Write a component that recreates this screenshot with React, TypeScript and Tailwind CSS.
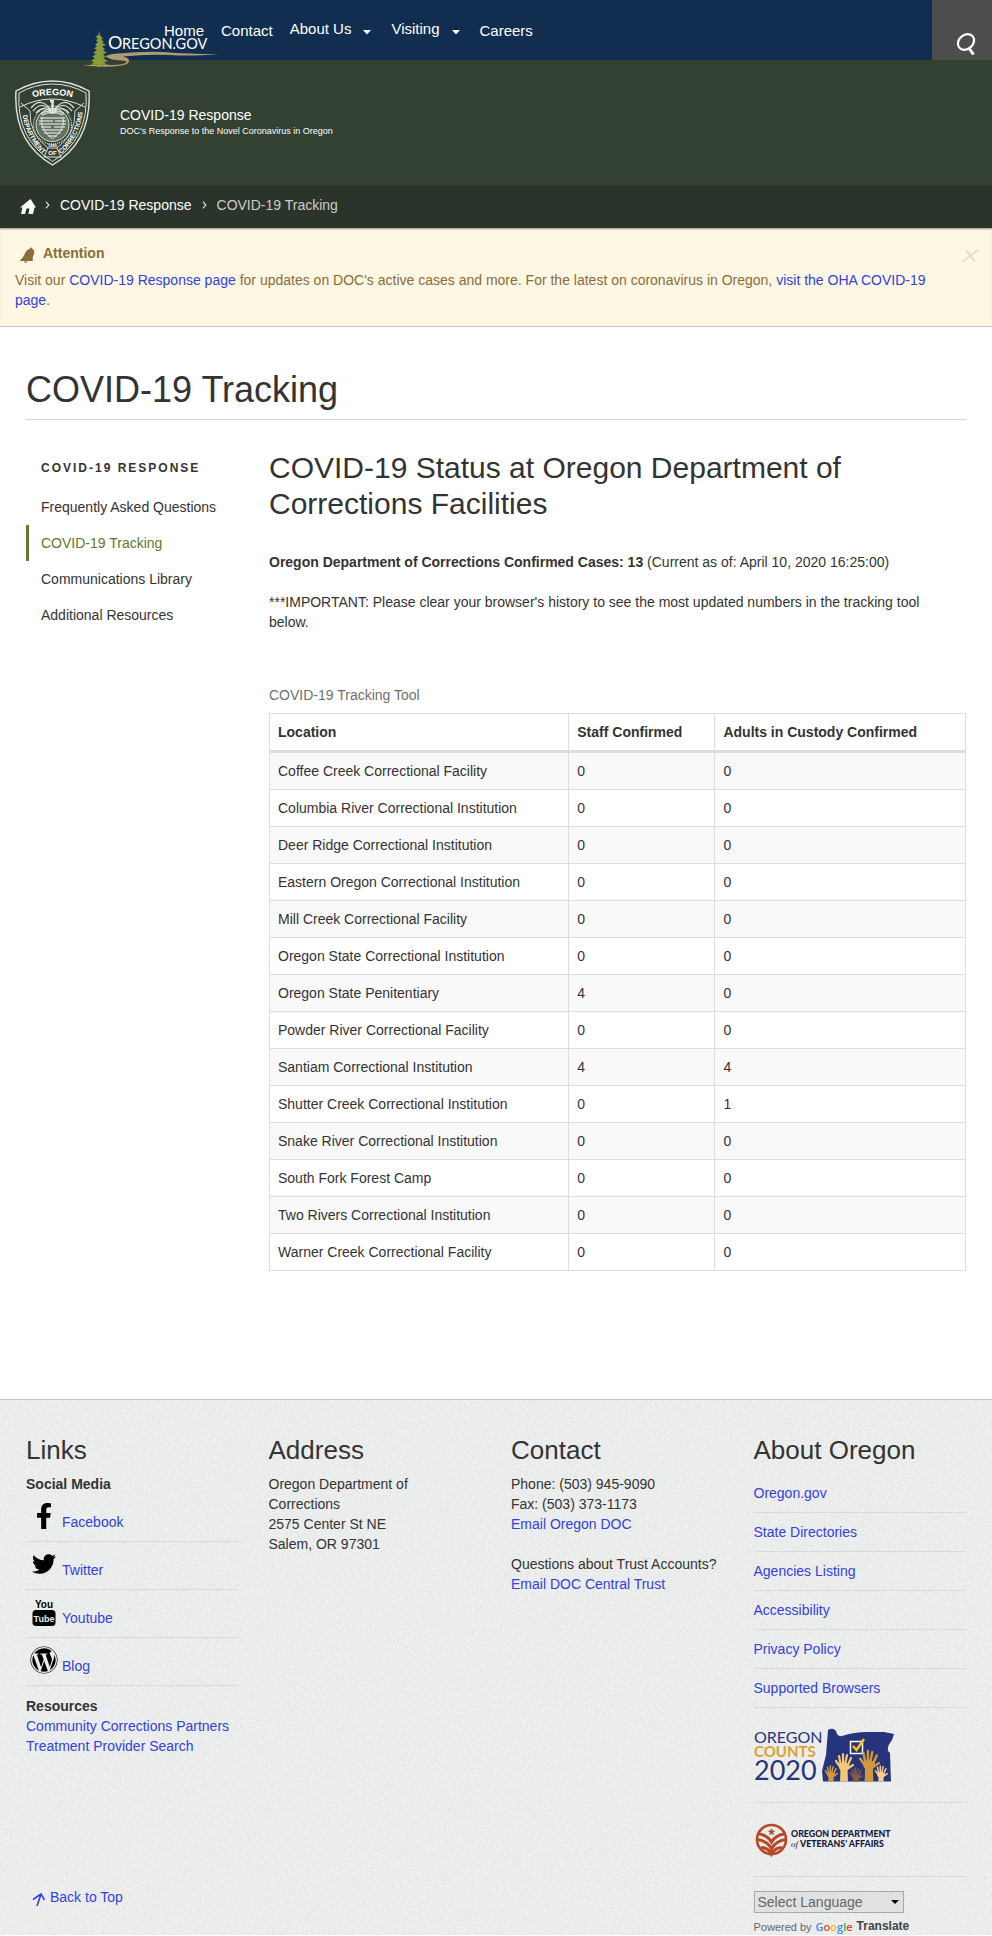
import React from "react";
import { FaFacebookF, FaTwitter, FaWordpress } from "react-icons/fa";

const rows: [string, number, number][] = [
  ["Coffee Creek Correctional Facility", 0, 0],
  ["Columbia River Correctional Institution", 0, 0],
  ["Deer Ridge Correctional Institution", 0, 0],
  ["Eastern Oregon Correctional Institution", 0, 0],
  ["Mill Creek Correctional Facility", 0, 0],
  ["Oregon State Correctional Institution", 0, 0],
  ["Oregon State Penitentiary", 4, 0],
  ["Powder River Correctional Facility", 0, 0],
  ["Santiam Correctional Institution", 4, 4],
  ["Shutter Creek Correctional Institution", 0, 1],
  ["Snake River Correctional Institution", 0, 0],
  ["South Fork Forest Camp", 0, 0],
  ["Two Rivers Correctional Institution", 0, 0],
  ["Warner Creek Correctional Facility", 0, 0],
];

const link = "text-[#3341dd] hover:underline";

function OregonGovLogo() {
  return (
    <svg viewBox="0 0 140 38" className="h-[38px] w-[140px] overflow-visible" role="img" aria-label="Oregon.gov">
      <path d="M-15 34.500 Q2 33 14 34 Q26 33.500 28 31.500 Q30 30 24 29.500 Q12 29 8 26 Q7 23.500 20 22.500 Q45 20 66 21 Q90 23 120 23 Q92 25.500 72 24 Q48 23 25 25.500 Q32 27 31 30.500 Q30 34 20 35 Q8 36.500 -15 34.500Z" fill="#b09a70" />
      <path d="M1 0 L2 4 5 8 3 8.500 6 11 4 12 8 14 4 15.500 7 18 5 19 9 22 5 23 8 26 5 27 10 30 6 31 9 34 3 33.500V36H-0.500V33.500L-7 34 -4 31 -7 30 -3 27 -6 26 -2 23 -5 22 -1 19 -4 17.500 -1 15 -3 14 0 11 -2 9.500 0 7 -3 6 0.500 4Z" fill="#8b9d3a" />
      <g fill="#fff" fontFamily="Lato, sans-serif">
        <text x="10" y="17.500" fontSize="18">O</text>
        <text x="24" y="17.500" fontSize="14.500">REGON.GOV</text>
      </g>
    </svg>
  );
}

function Seal() {
  return (
    <svg viewBox="0 0 75 86" className="h-[86px] w-[75px]" role="img" aria-label="Oregon Department of Corrections">
      <defs>
        <path id="seal-top" d="M12 19 Q37.500 11 63 19" />
        <path id="seal-left" d="M7.500 31 Q9 57 31 77" />
        <path id="seal-right" d="M44 76 Q66 57 68 29" />
      </defs>
      <g fill="none" stroke="#dfe4df">
        <path d="M37.500 1 Q56 1 74 11 Q77 62 37.500 85 Q-2 62 1 11 Q19 1 37.500 1Z" strokeWidth="1.400" />
        <path d="M37.500 4 Q55 4 71 13 Q74 59 37.500 81.500 Q1 59 4 13 Q20 4 37.500 4Z" />
        <path d="M5 27 Q37 11 70 27 M6 23 L15 31 M69 23 L60 31" />
        <path d="M15 31 Q14 54 33 68 H42 Q61 54 60 31" strokeWidth="0.900" />
        <path d="M33 68 L29 77 H46 L42 68" />
        <circle cx="37.500" cy="45" r="19" strokeDasharray="1 1" strokeWidth="1.300" />
        <circle cx="37.500" cy="45" r="16.500" fill="#62705f" />
        <path d="M36 30 Q26 16 16 28 M36 31 Q27 20 18 31 M36 32 Q28 25 21 33 M36 33 Q30 30 26 34 M39 30 Q49 16 59 28 M39 31 Q48 20 57 31 M39 32 Q47 25 54 33 M39 33 Q45 30 49 34" strokeWidth="1.200" />
        <path d="M37.500 20 V34 M35 21 H39" strokeWidth="2.500" />
        <path d="M27 35 Q37 30 48 35 M25 38 H50 M24 41 H38 M40 41 H51 M24 44 H51 M26 47 H36 M39 47 H50 M27 50 H48 M29 53 H46 M33 56 H42" strokeWidth="1.700" opacity="0.800" />
        <path d="M27 37 Q24 49 37.500 59 Q51 49 48 37" />
      </g>
      <g fill="#fff" fontFamily="Liberation Sans, sans-serif" fontWeight="700" textAnchor="middle">
        <text fontSize="9"><textPath href="#seal-top" startOffset="50%">OREGON</textPath></text>
        <text fontSize="6.500"><textPath href="#seal-left" startOffset="50%">DEPARTMENT</textPath></text>
        <text fontSize="6.500"><textPath href="#seal-right" startOffset="50%">CORRECTIONS</textPath></text>
        <text x="37.500" y="75" fontSize="6">OF</text>
        <text x="37.500" y="66.500" fontSize="4">1880</text>
      </g>
    </svg>
  );
}

function YoutubeIcon() {
  return (
    <svg viewBox="0 0 24 28" className="h-7 w-6 overflow-visible" aria-hidden="true">
      <rect x="0.500" y="12" width="23" height="16" rx="3.500" />
      <text x="12" y="9.500" textAnchor="middle" fontFamily="Liberation Sans, sans-serif" fontWeight="700" fontSize="10">You</text>
      <text x="12" y="24" textAnchor="middle" fill="#ecedec" fontFamily="Liberation Sans, sans-serif" fontWeight="700" fontSize="9">Tube</text>
    </svg>
  );
}

function Hand({ x, y, s, fill }: { x: number; y: number; s: number; fill: string }) {
  return (
    <g transform={`translate(${x} ${y}) scale(${s})`} stroke={fill} fill={fill} strokeLinecap="round" strokeWidth="2.200">
      <path d="M-4 11 Q-5 13 -2.500 16 L-3 32 H3 L2.500 16 Q5 13 4 11 L0 9Z" />
      <path d="M-3 12 L-5 2 M-1 11 L-1 0 M1 11 L3 1 M3 13 L7 4 M-3 14 L-8 7 M3 15 L9 11" fill="none" />
    </g>
  );
}

function CountsLogo() {
  return (
    <svg viewBox="0 0 140 56" className="h-14 w-[140px] overflow-visible" role="img" aria-label="Oregon Counts 2020">
      <defs>
        <clipPath id="state-base"><rect x="66" y="0" width="72" height="54.500" /></clipPath>
      </defs>
      <path d="M74 3 Q79 0 82 4 Q83 10 88 9 Q100 5 113 5 H130 L140 7 L138 13 Q133 19 134 24 L136 26 L137 54.500 H69 L68 44 L72 28 Z" fill="#26347b" />
      <g fontFamily="Lato, sans-serif">
        <text x="0" y="16" fontSize="16" fill="#26347b">OREGON</text>
        <text x="0" y="30" fontSize="15" fontWeight="700" fill="#d9a22f">COUNTS</text>
        <text x="0" y="53" fontSize="27" fill="#26347b">2020</text>
      </g>
      <rect x="96.500" y="14.500" width="12" height="12" fill="none" stroke="#fff" strokeWidth="1.500" />
      <path d="M99 19 L102.500 23 L110 12" fill="none" stroke="#ffc20e" strokeWidth="2.500" />
      <g clipPath="url(#state-base)">
        <Hand x={77} y={39} s={0.7} fill="#cf983a" />
        <Hand x={90} y={27} s={1} fill="#f0c878" />
        <Hand x={102} y={41} s={0.7} fill="#8a5a3c" />
        <Hand x={115} y={24} s={1.1} fill="#cf983a" />
        <Hand x={127} y={39} s={0.7} fill="#f5cf92" />
      </g>
    </svg>
  );
}

function VeteransLogo() {
  return (
    <svg viewBox="0 0 140 34" className="h-[34px] w-[140px]" role="img" aria-label="Oregon Department of Veterans' Affairs">
      <circle cx="17.500" cy="16.500" r="14.500" fill="none" stroke="#b9492b" strokeWidth="2.600" />
      <path d="M17.500 5 l1 2.500 2.700.2-2 1.800.7 2.700-2.400-1.500-2.400 1.500.7-2.700-2-1.800 2.700-.2z" fill="#b9492b" />
      <path d="M5 11 Q13 12 17.500 19 Q22 12 30 11 M3.500 16.500 Q13 18 17.500 25.500 Q22 18 31.500 16.500 M7 24.500 Q14 24.500 17.500 31 Q21 24.500 28 24.500" fill="none" stroke="#b9492b" strokeWidth="3.200" />
      <g fill="#14183c" fontFamily="Lato, sans-serif" fontWeight="900" fontSize="8.800">
        <text x="37" y="14">OREGON DEPARTMENT</text>
        <text x="46" y="24">VETERANS’ AFFAIRS</text>
        <text x="37" y="24" fontFamily="Liberation Serif, serif" fontStyle="italic" fontWeight="400">of</text>
      </g>
    </svg>
  );
}

function Caret() {
  return (
    <svg viewBox="0 0 8 5" className="mt-[10px] h-[5px] w-2" aria-hidden="true">
      <path d="M0 0H8L4 4.500Z" fill="#fff" />
    </svg>
  );
}

function Chevron() {
  return (
    <svg viewBox="0 0 5 9" className="h-2 w-[5px]" aria-hidden="true">
      <path d="M.7.700 4 4.500.700 8.300" fill="none" stroke="#ddd" strokeWidth="1.300" />
    </svg>
  );
}

const social = [
  { name: "Facebook", icon: <FaFacebookF className="size-[26px]" /> },
  { name: "Twitter", icon: <FaTwitter className="size-6" /> },
  { name: "Youtube", icon: <YoutubeIcon /> },
  { name: "Blog", icon: <FaWordpress className="size-7" /> },
];

const about = ["Oregon.gov", "State Directories", "Agencies Listing", "Accessibility", "Privacy Policy", "Supported Browsers"];

const columns = [
  { title: "Location", width: "w-[43%]" },
  { title: "Staff Confirmed", width: "w-[21%]" },
  { title: "Adults in Custody Confirmed", width: "w-[36%]" },
];

export default function App() {
  return (
    <div className="bg-white font-['Liberation_Sans',Arial,sans-serif] text-sm leading-5 text-[#333]">
      <header>
        <div className="relative flex h-[60px] justify-between bg-[#112d50]">
          <a href="#" className="absolute top-[31px] left-[98px]"><OregonGovLogo /></a>
          <nav aria-label="Main" className="relative ml-[164px] flex items-start pt-5 text-[15px] text-white">
            <a href="#" className="mr-[17px] pt-px">Home</a>
            <a href="#" className="mr-[17px] pt-px">Contact</a>
            <button className="mr-5 flex gap-3"><span className="-mt-px">About Us</span><Caret /></button>
            <button className="mr-5 flex gap-3"><span className="-mt-px">Visiting</span><Caret /></button>
            <a href="#" className="pt-px">Careers</a>
          </nav>
          <button aria-label="Search" className="flex w-[60px] items-end justify-end bg-[#4d4d4d] pr-4 pb-1">
            <svg viewBox="0 0 20 23" className="h-[23px] w-5" aria-hidden="true">
              <ellipse cx="10" cy="9" rx="8.800" ry="7" transform="rotate(-40 10 9)" fill="none" stroke="#fff" strokeWidth="2.200" />
              <path d="M12.500 14.500 17.500 21.500" stroke="#fff" strokeWidth="3" />
            </svg>
          </button>
        </div>
        <div className="flex h-[125px] items-start bg-[#334133] pt-5 pl-[15px] text-white">
          <Seal />
          <div className="mt-[25px] ml-[30px]">
            <p>COVID-19 Response</p>
            <p className="text-[9px] leading-3">DOC's Response to the Novel Coronavirus in Oregon</p>
          </div>
        </div>
        <nav aria-label="Breadcrumb" className="flex h-[43px] items-center bg-[#2b342b] pb-1 pl-5 text-white">
          <a href="#" aria-label="Home">
            <svg viewBox="0 0 16 15" className="mt-1 h-[15px] w-4" aria-hidden="true">
              <path d="M0 8.500 10.500 0 16 8.500H14.500L13 15H8.500L9.500 9.500H6.500L5 15H1L2.500 8.500Z" fill="#fff" />
            </svg>
          </a>
          <span className="ml-[9px]"><Chevron /></span>
          <a href="#" className="ml-[10px]">COVID-19 Response</a>
          <span className="ml-[10px]"><Chevron /></span>
          <span className="ml-[10px] text-[#ccc]">COVID-19 Tracking</span>
        </nav>
      </header>

      <section aria-label="Attention" className="relative border-b border-[#c8c8c8] bg-[#fdf7e3] pt-[15px] pr-10 pb-4 pl-[15px] text-[#8a6d3b] shadow-[inset_0_2px_2px_-1px_rgba(0,0,0,0.4)]">
        <h2 className="flex font-bold">
          <svg viewBox="0 0 16 16" className="mt-1 mr-2 ml-1 h-4 w-4" aria-hidden="true">
            <path d="M1 13.500Q5 10 6 6Q7.500 2.500 11 1.500L12 0L13 1.500Q16 3 15 7Q13 11 14 14H1ZM5 14.500H8.500Q7.500 16.500 5.500 15.500Z" fill="#8a6d3b" />
          </svg>
          Attention
        </h2>
        <p className="mt-[7px]">
          Visit our <a href="#" className={link}>COVID-19 Response page</a> for updates on DOC's active cases and more. For the latest on coronavirus in Oregon, <a href="#" className={link}>visit the OHA COVID-19 page</a>.
        </p>
        <button aria-label="Close" className="absolute top-[21px] right-[13px]">
          <svg viewBox="0 0 18 14" className="h-[14px] w-[18px]" aria-hidden="true">
            <path d="M1 13 17 1M5 1 14 13" stroke="#e6dfcb" strokeWidth="2" fill="none" />
          </svg>
        </button>
      </section>

      <main className="px-[26px] pt-[42px]">
        <h1 className="border-b border-[#d6d7d9] pb-[9px] text-4xl leading-[41px]">COVID-19 Tracking</h1>
        <div className="grid grid-cols-[243px_1fr] pt-[30px]">
          <nav aria-label="Section">
            <h2 className="pt-2 pb-[11px] pl-[15px] text-xs leading-5 font-bold tracking-[2px]">COVID-19 RESPONSE</h2>
            <ul>
              {["Frequently Asked Questions", "COVID-19 Tracking", "Communications Library", "Additional Resources"].map((t) => (
                <li key={t}>
                  <a href="#" className={t === "COVID-19 Tracking" ? "block border-l-3 border-[#5e7a30] py-2 pl-3 text-[#5e7a30]" : "block py-2 pl-[15px]"}>{t}</a>
                </li>
              ))}
            </ul>
          </nav>
          <div>
            <h2 className="text-3xl leading-9">COVID-19 Status at Oregon Department of Corrections Facilities</h2>
            <p className="mt-[30px]"><strong>Oregon Department of Corrections Confirmed Cases: 13</strong> (Current as of: April 10, 2020 16:25:00)</p>
            <p className="mt-5 pr-5">***IMPORTANT: Please clear your browser's history to see the most updated numbers in the tracking tool below.</p>
            <table className="mt-[45px] w-full border-collapse text-left">
              <caption className="py-2 text-left text-[#6f6f6f]">COVID-19 Tracking Tool</caption>
              <thead>
                <tr>
                  {columns.map((c) => (
                    <th key={c.title} scope="col" className={c.width + " border border-b-3 border-[#ddd] p-2"}>{c.title}</th>
                  ))}
                </tr>
              </thead>
              <tbody>
                {rows.map(([name, staff, custody]) => (
                  <tr key={name} className="odd:bg-[#f9f9f9]">
                    <td className="border border-[#ddd] p-2">{name}</td>
                    <td className="border border-[#ddd] p-2">{staff}</td>
                    <td className="border border-[#ddd] p-2">{custody}</td>
                  </tr>
                ))}
              </tbody>
            </table>
          </div>
        </div>
      </main>

      <footer className="relative mt-32 border-t border-[#c8c8c8] bg-[#e4e6e6] px-[26px] pt-8">
        <svg className="absolute inset-0 h-full w-full" aria-hidden="true">
          <filter id="grain" x="0" y="0" width="100%" height="100%">
            <feTurbulence type="fractalNoise" baseFrequency="0.7" numOctaves="2" seed="4" />
            <feColorMatrix values="0 0 0 0 1  0 0 0 0 1  0 0 0 0 1  1.200 0 0 0 -0.350" />
          </filter>
          <rect width="100%" height="100%" filter="url(#grain)" />
        </svg>
        <div className="relative grid grid-cols-4 gap-x-[30px]">
          <section>
            <h2 className="mb-[6px] text-[26px] leading-9">Links</h2>
            <h3 className="font-bold">Social Media</h3>
            <ul>
              {social.map((s) => (
                <li key={s.name} className="flex h-12 items-center border-b border-[#d8dadb] pb-1">
                  <span className="flex w-9 justify-center text-black">{s.icon}</span>
                  <a href="#" className={link + " mt-3"}>{s.name}</a>
                </li>
              ))}
            </ul>
            <h3 className="mt-[10px] font-bold">Resources</h3>
            <a href="#" className={link + " block whitespace-nowrap"}>Community Corrections Partners</a>
            <a href="#" className={link + " block"}>Treatment Provider Search</a>
          </section>
          <section>
            <h2 className="mb-[6px] text-[26px] leading-9">Address</h2>
            <address className="w-[160px] not-italic">Oregon Department of Corrections<br />2575 Center St NE<br />Salem, OR 97301</address>
          </section>
          <section>
            <h2 className="mb-[6px] text-[26px] leading-9">Contact</h2>
            <p>Phone: (503) 945-9090<br />Fax: (503) 373-1173<br /><a href="#" className={link}>Email Oregon DOC</a></p>
            <p className="mt-5 whitespace-nowrap">Questions about Trust Accounts?<br /><a href="#" className={link}>Email DOC Central Trust</a></p>
          </section>
          <section>
            <h2 className="mb-[6px] text-[26px] leading-9">About Oregon</h2>
            <ul>
              {about.map((t) => (
                <li key={t} className="h-[39px] border-b border-[#d8dadb] pt-[9px]"><a href="#" className={link}>{t}</a></li>
              ))}
              <li className="h-[95px] border-b border-[#d8dadb] pt-[19px]"><a href="#"><CountsLogo /></a></li>
              <li className="h-[74px] border-b border-[#d8dadb] pt-5"><a href="#"><VeteransLogo /></a></li>
            </ul>
          </section>
        </div>
        <div className="relative grid grid-cols-4 gap-x-[30px]">
          <a href="#" className={link + " col-span-3 flex items-start pt-[10px] pl-[6px]"}>
            <svg viewBox="0 0 14 14" className="mt-[6px] mr-1 size-[14px]" aria-hidden="true">
              <path d="M1 6.500 9 1 12.500 7M9 1 5 13" fill="none" stroke="#3341dd" strokeWidth="1.600" />
            </svg>
            Back to Top
          </a>
          <div className="pt-[14px]">
            <div className="relative w-[150px]">
              <select aria-label="Select Language" className="block h-[22px] w-full appearance-none border border-[#a9a9a9] bg-[#e1e1e1] px-[3px] text-sm leading-4 text-[#666]">
                <option>Select Language</option>
              </select>
              <svg viewBox="0 0 8 4" className="pointer-events-none absolute top-[9px] right-[5px] h-1 w-2" aria-hidden="true"><path d="M0 0H8L4 4Z" /></svg>
            </div>
            <p className="flex h-[22px] items-start gap-1 pt-1 text-[11px] leading-5 text-[#666]">
              Powered by
              <span className="font-['Open_Sans',sans-serif] font-semibold">
                <span className="text-[#4285f4]">G</span><span className="text-[#ea4335]">o</span><span className="text-[#fbbc05]">o</span><span className="text-[#4285f4]">g</span><span className="text-[#34a853]">l</span><span className="text-[#ea4335]">e</span>
              </span>
              <a href="#" className="text-xs leading-[19px] font-bold text-[#444]">Translate</a>
            </p>
          </div>
        </div>
      </footer>
    </div>
  );
}
